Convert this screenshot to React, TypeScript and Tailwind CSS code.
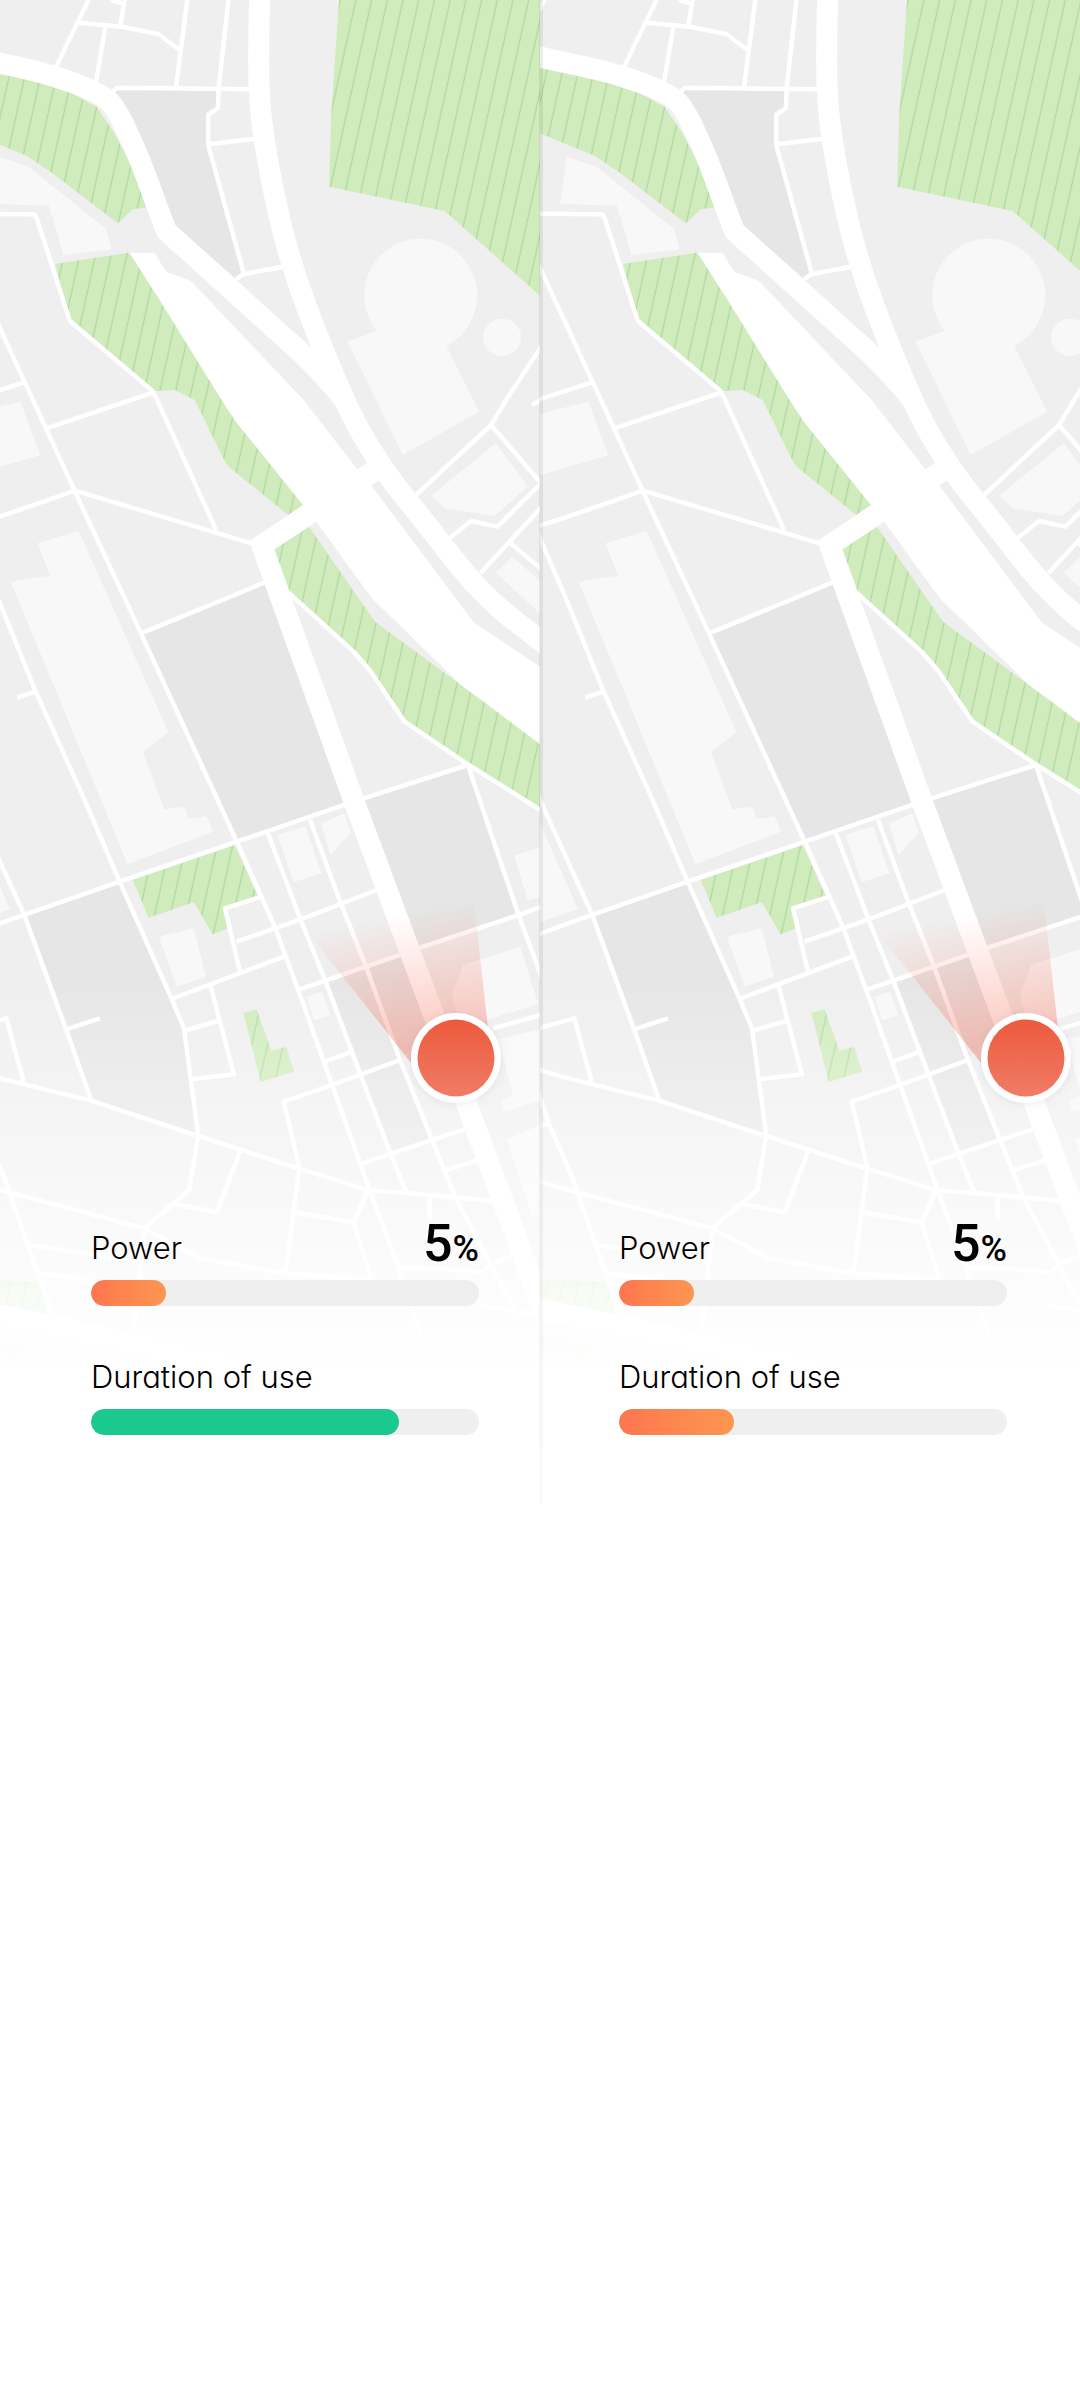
import { useId } from "react";

/* Map geometry. Drawing units: 2.8 per pixel across, 3 per pixel down. */
const PARKS = [
  "-90,201 0,220 110,248 200,280 270,320 320,400 370,500 415,622 372,628 330,670 145,518 76,468 -90,395",
  "155,792 362,758 450,905 525,1035 620,1200 660,1265 848,1515 807,1545 640,1400 630,1385 545,1200 490,1170 428,1174 200,962 190,950",
  "950,-10 1540,-10 1540,912 1515,890 1245,633 922,560 927,350",
  "763,1648 865,1580 1050,1865 1360,2110 1540,2255 1540,2445 1130,2160 1030,2000 985,1945 805,1768",
  "372,2640 657,2535 722,2690 630,2725 640,2785 595,2803 543,2707 416,2753",
  "682,3040 718,3027 760,3152 802,3140 822,3215 730,3246",
  "-90,3838 105,3845 143,3948 0,3923 -90,3905",
  "-90,4005 65,4035 65,4085 0,4060 -90,4050",
];

const BLOCKS = [
  "325,268 612,272 612,325 583,343 583,435 680,822 660,835 490,677 385,430 315,280",
  "398,1900 740,1748 965,2410 663,2525",
  "1010,2395 1310,2295 1452,2745 1170,2842",
  "70,2750 335,2650 480,2995 515,3090 555,3405 250,3305",
  "912,2945 1125,2865 1205,3080 1120,3180 1010,3222",
  "1010,3225 1120,3185 1210,3420 1095,3460",
];

const BUILDINGS = [
  "-3,470 80,500 298,688 312,748 178,765 137,617 -22,612",
  "973,1025 1053,993 1250,1038 1342,1235 1128,1365",
  "1388,1330 1478,1458 1385,1548 1245,1525 1207,1487",
  "1435,1670 1388,1718 1540,1868 1540,1770",
  "57,1205 113,1365 -90,1430 -90,1244",
  "105,1630 220,1592 472,2197 400,2255 460,2428 515,2420 530,2458 578,2448 597,2495 357,2592 30,1745 140,1727",
  "445,2810 543,2785 577,2930 495,2960",
  "777,2505 855,2478 900,2620 822,2647",
  "900,2470 965,2440 982,2500 925,2565",
  "860,2990 902,2975 925,3045 878,3062",
  "1440,2567 1545,2530 1600,2660 1478,2702",
  "1297,2895 1457,2840 1507,3012 1360,3060 1290,3080 1265,2985",
  "1395,3118 1540,3080 1540,3293 1408,3337 1405,3305 1437,3285",
  "1420,3418 1540,3360 1600,3650 1490,3650",
  "-90,2440 28,2728 -90,2770",
];

const STREETS = [
  "250,-5 155,205",
  "310,0 345,10",
  "350,-5 337,75",
  "220,68 340,80 443,102 503,150",
  "295,80 268,250",
  "525,-5 493,262",
  "640,-5 612,268 610,325 583,343 583,435 683,822 660,838",
  "683,822 795,800",
  "312,278 328,263 700,268",
  "590,432 715,416",
  "-90,641 95,643 103,655 195,962 428,1174 440,1200 605,1590",
  "-80,30 -62,-10",
  "1540,1000 1420,1195 1375,1275 1160,1490",
  "1375,1275 1515,1450 1393,1580 1320,1563 1255,1617",
  "1490,1215 1530,1190",
  "1530,1505 1345,1720",
  "1430,1630 1530,1720",
  "-90,778 0,985 210,1475 395,1900 663,2525 770,2782 835,2970 1010,3495 1035,3572",
  "-90,1201 65,1148",
  "130,1285 430,1177",
  "-90,1581 0,1550 210,1472 705,1630",
  "395,1900 740,1748",
  "-90,1586 0,1810 100,2075 237,2400 335,2645 480,2995 515,3085 555,3405",
  "48,2093 100,2075",
  "805,1775 990,1955 1035,2010 1133,2165 1305,2290 1540,2448",
  "-90,2806 0,2770 335,2645 663,2525 990,2405 1310,2295 1452,2745 1530,2970",
  "-90,2372 0,2585 70,2750 185,3088 255,3300",
  "185,3088 280,3055",
  "-90,3207 0,3235 255,3302 555,3408 835,3505 1030,3570 1275,3592 1400,3605",
  "-90,3087 18,3055 66,3245",
  "480,2997 795,2870",
  "725,2692 630,2725 672,2915",
  "662,2825 850,2755 1055,2670",
  "590,2960 655,3223 538,3238",
  "515,3093 610,3063",
  "750,2500 840,2755 912,2945 1010,3225 1095,3465 1138,3580",
  "868,2460 955,2712 1025,2900 1120,3180 1210,3420 1275,3592 1440,3925",
  "835,2970 910,2943 1120,2865",
  "1170,2845 1452,2745 1540,2712",
  "910,3185 985,3155",
  "1120,3180 925,3257 795,3305 838,3505 800,3815",
  "1010,3492 1210,3420 1310,3385",
  "1250,3510 1340,3480",
  "1380,3085 1530,3040",
  "672,3455 607,3637 485,3612",
  "555,3408 530,3570 405,3685 395,3785 375,4000",
  "-90,3540 0,3570 405,3685 560,3775 800,3820 1040,3840",
  "-90,3255 -54,3370 15,3540 105,3820 175,4030",
  "-90,3381 -54,3370",
  "80,3735 390,3785",
  "110,3820 250,3840",
  "1030,3572 990,3668 1040,3835",
  "828,3637 990,3668",
  "1035,3572 1115,3800 1200,4080",
  "1203,3590 1203,3660",
  "1115,3800 1350,3815 1380,3790 1440,3765",
  "1340,3915 1530,3950",
];

const ROADS = [
  "M-90,168 L0,190 C60,203 110,215 155,230 S260,270 292,292 S345,370 369,425 S420,560 440,620 L466,693 L835,1050 Q900,1115 965,1200",
  "M727,-10 C722,200 722,300 740,420 S785,680 820,800 S920,1090 965,1200 S1085,1430 1140,1500 S1260,1670 1328,1750 S1450,1870 1560,1960",
  "M1055,1408 L868,1540 L733,1636 L990,2400 L1407,3600 L1530,3960",
  "M-90,3926 L140,3975 L700,4110",
];

const RIVER =
  "362,758 432,758 465,815 535,843 850,1200 1002,1410 1040,1457 1325,1865 1345,1880 1540,2020 1540,2255 1360,2115 1310,2075 1075,1830 1045,1800 885,1565 848,1515 660,1265 620,1200";

function CityMap({ viewBox, markerX }: { viewBox: string; markerX: number }) {
  const id = useId();
  const hatch = `${id}-hatch`;
  const fade = `${id}-fade`;
  const beam = `${id}-beam`;
  const dot = `${id}-dot`;
  const glow = `${id}-glow`;
  return (
    <svg
      className="absolute inset-0 h-full w-full"
      viewBox={viewBox}
      preserveAspectRatio="xMinYMin slice"
      aria-hidden="true"
    >
      <defs>
        <pattern id={hatch} width="44" height="4600" patternUnits="userSpaceOnUse" patternTransform="skewX(-11.6)">
          <rect width="44" height="4600" fill="#d0ebbc" />
          <rect x="27" width="3" height="4600" fill="#a9d59c" />
        </pattern>
        <linearGradient id={fade} gradientUnits="userSpaceOnUse" x1="0" y1="980" x2="0" y2="1375">
          <stop offset="0" stopColor="#fff" stopOpacity="0" />
          <stop offset="0.3" stopColor="#fff" stopOpacity="0.32" />
          <stop offset="0.75" stopColor="#fff" stopOpacity="0.8" />
          <stop offset="1" stopColor="#fff" />
        </linearGradient>
        <linearGradient id={beam} gradientUnits="userSpaceOnUse" x1="-62" y1="-144" x2="-32" y2="0">
          <stop offset="0" stopColor="#f4573c" stopOpacity="0" />
          <stop offset="1" stopColor="#f4573c" stopOpacity="0.36" />
        </linearGradient>
        <linearGradient id={dot} x1="0" y1="0" x2="0" y2="1">
          <stop offset="0" stopColor="#ec5a3c" />
          <stop offset="1" stopColor="#f17b66" />
        </linearGradient>
        <filter id={glow} x="-30%" y="-30%" width="160%" height="160%">
          <feDropShadow dx="0" dy="1" stdDeviation="4" floodColor="#8c96b4" floodOpacity="0.2" />
        </filter>
      </defs>

      <rect x="-30" width="620" height="1504" fill="#efefef" />
      <g transform="scale(0.35714 0.33333)">
        {BLOCKS.map((p) => (
          <polygon key={p} points={p} fill="#e6e6e6" />
        ))}
        {BUILDINGS.map((p) => (
          <polygon key={p} points={p} fill="#f8f8f8" />
        ))}
        <ellipse cx="1178" cy="886" rx="158" ry="170" fill="#f8f8f8" />
        <ellipse cx="1406" cy="1012" rx="53" ry="56" fill="#f8f8f8" />
        <polygon points={RIVER} fill="#fff" />
        {PARKS.map((p) => (
          <polygon key={p} points={p} fill={`url(#${hatch})`} />
        ))}
        <g fill="none" stroke="#fff" strokeLinejoin="round">
          {STREETS.map((p) => (
            <polyline key={p} points={p} strokeWidth="4.5" vectorEffect="non-scaling-stroke" />
          ))}
          {ROADS.map((d) => (
            <path key={d} d={d} strokeWidth="21" strokeLinejoin="miter" vectorEffect="non-scaling-stroke" />
          ))}
        </g>
      </g>
      <rect x="-30" y="980" width="620" height="524" fill={`url(#${fade})`} />

      <g transform={`translate(${markerX} 1058)`}>
        <polygon points="-147,-124 17,-163 32,-30 0,0 -44,6" fill={`url(#${beam})`} />
        <circle r="45" fill="#fff" filter={`url(#${glow})`} />
        <circle r="38.5" fill={`url(#${dot})`} />
      </g>
    </svg>
  );
}

type Tone = "warm" | "good";

function Meter({ label, value, tone, text }: { label: string; value: number; tone: Tone; text?: string }) {
  const id = useId();
  return (
    <div>
      <div className="mb-3 flex items-end justify-between">
        <span id={id} className="text-[31px] leading-10 font-light [font-feature-settings:'cv11']">
          {label}
        </span>
        {text && (
          <span className="flex h-12 items-baseline font-['Roboto'] font-medium">
            <span className="text-[52px] leading-12">{text}</span>
            <span className="text-[36px] leading-8">%</span>
          </span>
        )}
      </div>
      <div
        role="progressbar"
        aria-labelledby={id}
        aria-valuenow={Math.round(value)}
        aria-valuemin={0}
        aria-valuemax={100}
        className="h-[26px] overflow-hidden rounded-full bg-[#efefef]"
      >
        <div
          className={
            tone === "good"
              ? "h-full rounded-full bg-[#1bc98e]"
              : "h-full rounded-full bg-linear-to-r from-[#fd764f] to-[#fd9650]"
          }
          style={{ width: `${value}%` }}
        />
      </div>
    </div>
  );
}

export default function App() {
  return (
    <main className="min-h-screen bg-white font-['Inter',sans-serif] text-black">
      <div className="relative grid grid-cols-2">
        <section className="relative overflow-hidden">
          <CityMap viewBox="0 0 540 1504" markerX={456} />
          <div className="relative flex flex-col gap-[51px] pt-[1220px] pr-[61px] pb-[69px] pl-[91px]">
            <Meter label="Power" value={19.4} tone="warm" text="5" />
            <Meter label="Duration of use" value={79.4} tone="good" />
          </div>
        </section>
        <section className="relative overflow-hidden">
          <CityMap viewBox="-28 0 540 1504" markerX={458} />
          <div className="relative flex flex-col gap-[51px] pt-[1220px] pr-[73px] pb-[69px] pl-[79px]">
            <Meter label="Power" value={19.4} tone="warm" text="5" />
            <Meter label="Duration of use" value={29.6} tone="warm" />
          </div>
        </section>
        <div className="absolute inset-y-0 left-1/2 -ml-px w-1 bg-linear-to-b from-black/7 from-65% to-black/2" />
      </div>
    </main>
  );
}
